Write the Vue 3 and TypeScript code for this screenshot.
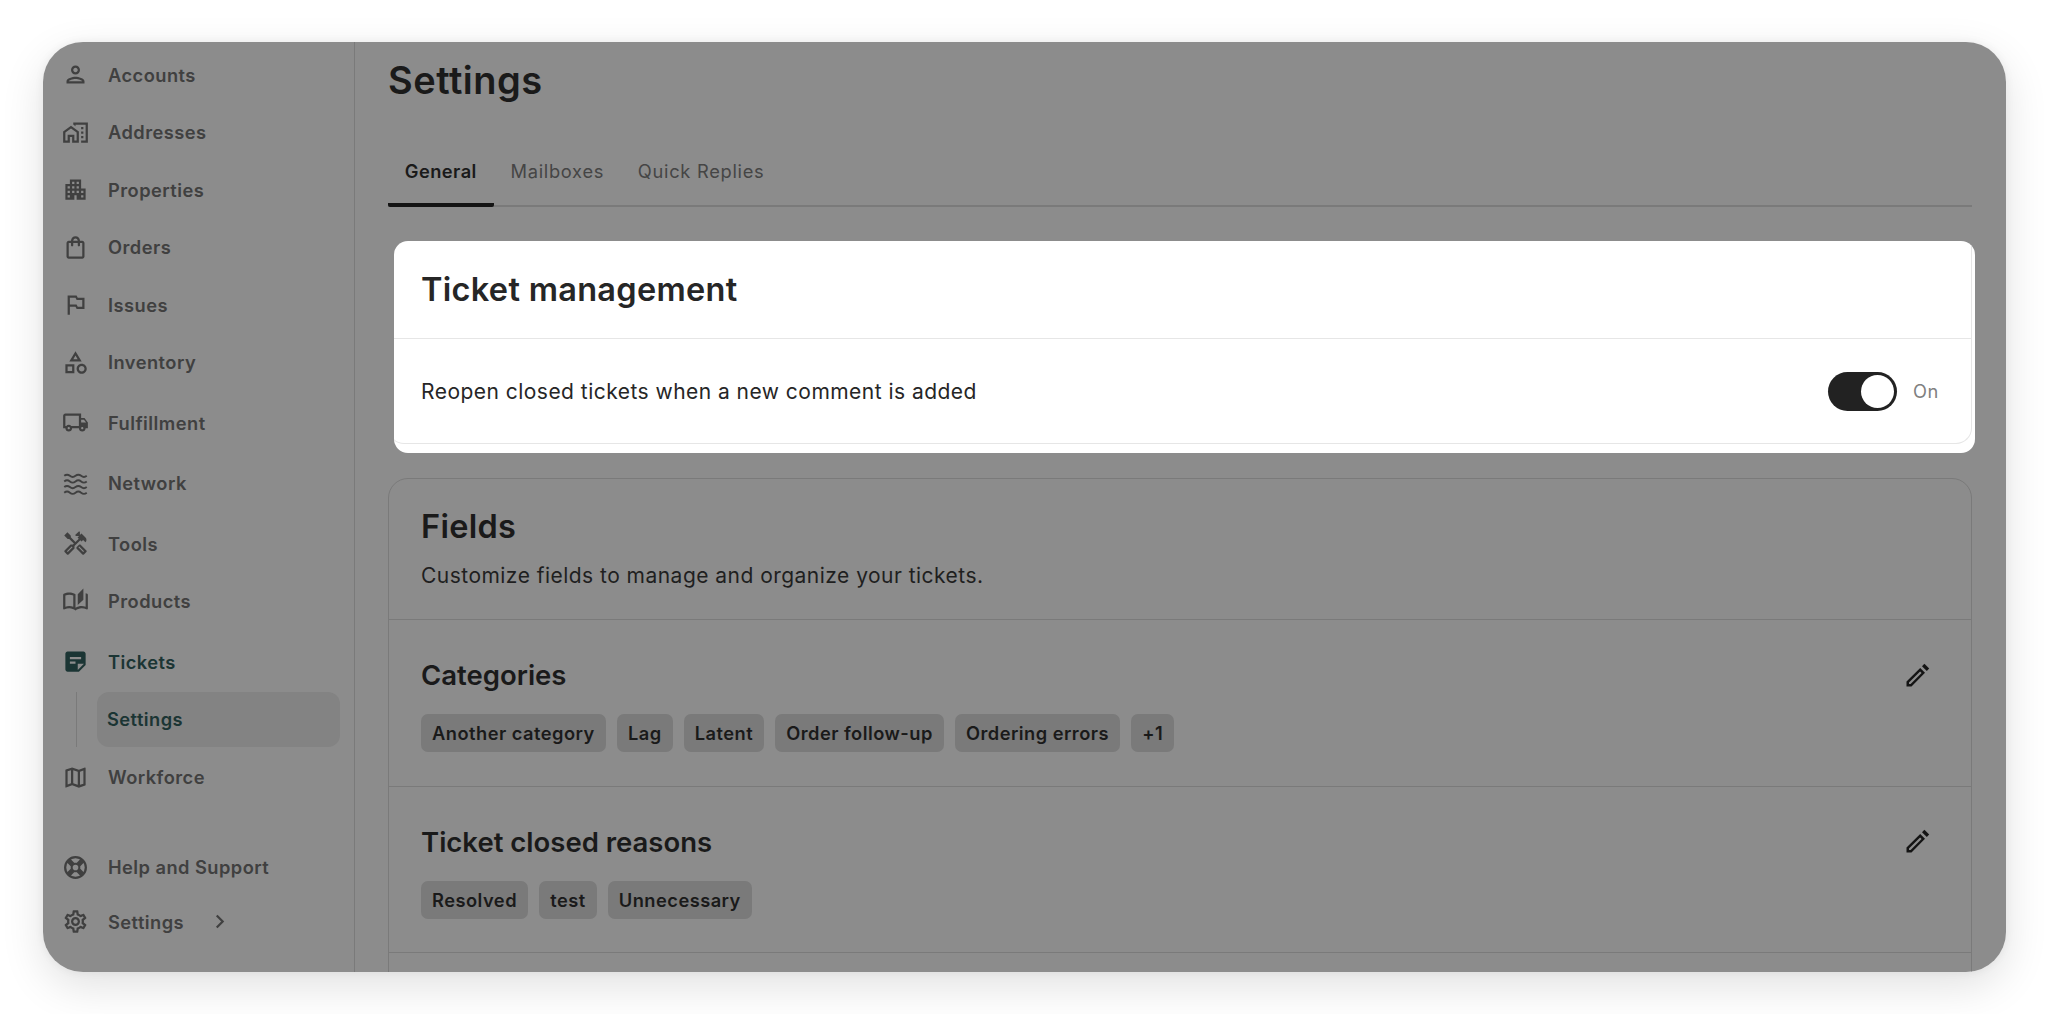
<script setup lang="ts">
interface NavItem { label: string; d: string; gap?: boolean; active?: boolean; stroke?: boolean }

const icons: Record<string, string> = {
  person: 'M12 6c1.1 0 2 .9 2 2s-.9 2-2 2-2-.9-2-2 .9-2 2-2m0 10c2.7 0 5.8 1.29 6 2H6c.23-.72 3.31-2 6-2m0-12C9.79 4 8 5.79 8 8s1.79 4 4 4 4-1.79 4-4-1.79-4-4-4zm0 10c-2.67 0-8 1.34-8 4v2h16v-2c0-2.66-5.33-4-8-4z',
  home: 'M1 11v10h6v-5h2v5h6V11L8 6l-7 5zm12 8h-2v-5H5v5H3v-7l5-3.5 5 3.5v7zm4-12h2v2h-2zm0 4h2v2h-2zm0 4h2v2h-2zM10 3v1.97l2 1.43V5h9v14h-4v2h6V3z',
  apartment: 'M17 11V3H7v4H3v14h8v-4h2v4h8V11h-4zM7 19H5v-2h2v2zm0-4H5v-2h2v2zm0-4H5V9h2v2zm4 4H9v-2h2v2zm0-4H9V9h2v2zm0-4H9V5h2v2zm4 8h-2v-2h2v2zm0-4h-2V9h2v2zm0-4h-2V5h2v2zm4 12h-2v-2h2v2zm0-4h-2v-2h2v2z',
  bag: 'M18 6h-2c0-2.21-1.79-4-4-4S8 3.79 8 6H6c-1.1 0-2 .9-2 2v12c0 1.1.9 2 2 2h12c1.1 0 2-.9 2-2V8c0-1.1-.9-2-2-2zm-6-2c1.1 0 2 .9 2 2h-4c0-1.1.9-2 2-2zm6 16H6V8h2v2c0 .55.45 1 1 1s1-.45 1-1V8h4v2c0 .55.45 1 1 1s1-.45 1-1V8h2v12z',
  flag: 'M14 6l-1-2H5v17h2v-7h5l1 2h7V6h-6zm4 8h-4l-1-2H7V6h5l1 2h5v6z',
  category: 'M12 2l-5.5 9h11L12 2zm0 3.84L13.93 9h-3.87L12 5.84zM17.5 13c-2.49 0-4.5 2.01-4.5 4.5s2.01 4.5 4.5 4.5 4.5-2.01 4.5-4.5-2.01-4.5-4.5-4.5zm0 7c-1.38 0-2.5-1.12-2.5-2.5s1.12-2.5 2.5-2.5 2.5 1.12 2.5 2.5-1.12 2.5-2.5 2.5zM3 21.5h8v-8H3v8zm2-6h4v4H5v-4z',
  truck: 'M20 8h-3V4H3c-1.1 0-2 .9-2 2v11h2c0 1.66 1.34 3 3 3s3-1.34 3-3h6c0 1.66 1.34 3 3 3s3-1.34 3-3h2v-5l-3-4zm-.5 1.5l1.96 2.5H17V9.5h2.5zM6 18c-.55 0-1-.45-1-1s.45-1 1-1 1 .45 1 1-.45 1-1 1zm2.22-3c-.55-.61-1.33-1-2.22-1s-1.67.39-2.22 1H3V6h12v9H8.22zM18 18c-.55 0-1-.45-1-1s.45-1 1-1 1 .45 1 1-.45 1-1 1z',
  waves: 'M2 5.2c1.7-1.4 3.3-1.4 5 0s3.3 1.4 5 0 3.3-1.4 5 0 3.3 1.4 5 0M2 10.2c1.7-1.4 3.3-1.4 5 0s3.3 1.4 5 0 3.3-1.4 5 0 3.3 1.4 5 0M2 15.2c1.7-1.4 3.3-1.4 5 0s3.3 1.4 5 0 3.3-1.4 5 0 3.3 1.4 5 0M2 20.2c1.7-1.4 3.3-1.4 5 0s3.3 1.4 5 0 3.3-1.4 5 0 3.3 1.4 5 0',
  tools: 'M21.67 18.17l-5.3-5.3h-.99l-2.54 2.54v.99l5.3 5.3c.39.39 1.02.39 1.41 0l2.12-2.12c.39-.38.39-1.02 0-1.41zm-2.83 1.42l-4.24-4.24.71-.71 4.24 4.24-.71.71zM17.34 10.19l1.41-1.41 2.12 2.12c1.17-1.17 1.17-3.07 0-4.24l-3.54-3.54-1.41 1.41V1.71l-.7-.71-3.54 3.54.71.71h2.83l-1.41 1.41 1.06 1.06-2.89 2.89-4.13-4.13V5.06L4.83 2.04 2 4.87 5.03 7.9h1.41l4.13 4.13-.85.85H7.6l-5.3 5.3c-.39.39-.39 1.02 0 1.41l2.12 2.12c.39.39 1.02.39 1.41 0l5.3-5.3v-2.12l5.15-5.15 1.06 1.05zm-7.98 5.15l-4.24 4.24-.71-.71 4.24-4.24.71.71z',
  book: 'M22.47 5.2C22 4.96 21.51 4.76 21 4.59v12.03C19.86 16.21 18.69 16 17.5 16c-1.9 0-3.78.54-5.5 1.58V5.48C10.38 4.55 8.51 4 6.5 4c-1.79 0-3.48.44-4.97 1.2-.33.16-.53.51-.53.88v12.08c0 .76.81.99 1.32.83C3.55 18.4 5 18 6.5 18c2.07 0 3.98.82 5.5 2 1.52-1.18 3.43-2 5.5-2 1.5 0 2.95.4 4.18.99.51.16 1.32-.07 1.32-.83V6.08c0-.37-.2-.72-.53-.88zM10 16.62C8.86 16.21 7.69 16 6.5 16c-1.19 0-2.36.21-3.5.62V6.71C4.11 6.24 5.28 6 6.5 6c1.2 0 2.39.25 3.5.72v9.9zM19 .5l-5 5V15l5-4.5V.5z',
  note: 'M19 3H4.99C3.89 3 3 3.9 3 5l.01 14c0 1.1.89 2 1.99 2h10l6-6V5c0-1.1-.9-2-2-2zM7 8h10v2H7V8zm5 6H7v-2h5v2zm2 5.5V14h5.5L14 19.5z',
  map: 'M20.5 3l-.16.03L15 5.1 9 3 3.36 4.9c-.21.07-.36.25-.36.48V20.5c0 .28.22.5.5.5l.16-.03L9 18.9l6 2.1 5.64-1.9c.21-.07.36-.25.36-.48V3.5c0-.28-.22-.5-.5-.5zM10 5.47l4 1.4v11.66l-4-1.4V5.47zm-5 .99l3-1.01v11.7l-3 1.16V6.46zm14 11.08l-3 1.01V6.86l3-1.16v11.84z',
  gear: 'M19.43 12.98c.04-.32.07-.64.07-.98 0-.34-.03-.66-.07-.98l2.11-1.65c.19-.15.24-.42.12-.64l-2-3.46c-.09-.16-.26-.25-.44-.25-.06 0-.12.01-.17.03l-2.49 1c-.52-.4-1.08-.73-1.69-.98l-.38-2.65C14.46 2.18 14.25 2 14 2h-4c-.25 0-.46.18-.49.42l-.38 2.65c-.61.25-1.17.59-1.69.98l-2.49-1c-.06-.02-.12-.03-.18-.03-.17 0-.34.09-.43.25l-2 3.46c-.13.22-.07.49.12.64l2.11 1.65c-.04.32-.07.65-.07.98 0 .33.03.66.07.98l-2.11 1.65c-.19.15-.24.42-.12.64l2 3.46c.09.16.26.25.44.25.06 0 .12-.01.17-.03l2.49-1c.52.4 1.08.73 1.69.98l.38 2.65c.03.24.24.42.49.42h4c.25 0 .46-.18.49-.42l.38-2.65c.61-.25 1.17-.59 1.69-.98l2.49 1c.06.02.12.03.18.03.17 0 .34-.09.43-.25l2-3.46c.12-.22.07-.49-.12-.64l-2.11-1.65zm-1.98-1.71c.04.31.05.52.05.73 0 .21-.02.43-.05.73l-.14 1.13.89.7 1.08.84-.7 1.21-1.27-.51-1.04-.42-.9.68c-.43.32-.84.56-1.25.73l-1.06.43-.16 1.13-.2 1.35h-1.4l-.19-1.35-.16-1.13-1.06-.43c-.43-.18-.83-.41-1.23-.71l-.91-.7-1.06.43-1.27.51-.7-1.21 1.08-.84.89-.7-.14-1.13c-.03-.31-.05-.54-.05-.74s.02-.43.05-.73l.14-1.13-.89-.7-1.08-.84.7-1.21 1.27.51 1.04.42.9-.68c.43-.32.84-.56 1.25-.73l1.06-.43.16-1.13.2-1.35h1.39l.19 1.35.16 1.13 1.06.43c.43.18.83.41 1.23.71l.91.7 1.06-.43 1.27-.51.7 1.21-1.07.85-.89.7.14 1.13zM12 8c-2.21 0-4 1.79-4 4s1.79 4 4 4 4-1.79 4-4-1.79-4-4-4zm0 6c-1.1 0-2-.9-2-2s.9-2 2-2 2 .9 2 2-.9 2-2 2z',
}

const navTop: NavItem[] = [
  { label: 'Accounts', d: icons.person },
  { label: 'Addresses', d: icons.home },
  { label: 'Properties', d: icons.apartment },
  { label: 'Orders', d: icons.bag },
  { label: 'Issues', d: icons.flag },
  { label: 'Inventory', d: icons.category },
  { label: 'Fulfillment', d: icons.truck, gap: true },
  { label: 'Network', d: icons.waves, gap: true, stroke: true },
  { label: 'Tools', d: icons.tools, gap: true },
  { label: 'Products', d: icons.book },
  { label: 'Tickets', d: icons.note, gap: true, active: true },
]

const tabs = ['General', 'Mailboxes', 'Quick Replies']

const groups = [
  { title: 'Categories', chips: ['Another category', 'Lag', 'Latent', 'Order follow-up', 'Ordering errors', '+1'] },
  { title: 'Ticket closed reasons', chips: ['Resolved', 'test', 'Unnecessary'] },
]
</script>

<template>
  <div class="page">
    <div class="window">
      <aside class="sidebar">
        <nav class="nav">
          <a
            v-for="item in navTop"
            :key="item.label"
            class="nav-item"
            :class="{ 'nav-gap': item.gap, 'nav-active': item.active }"
          >
            <svg class="nav-icon" viewBox="0 0 24 24">
              <path
                :d="item.d"
                :fill="item.stroke ? 'none' : 'currentColor'"
                :stroke="item.stroke ? 'currentColor' : 'none'"
                :stroke-width="item.stroke ? 1.7 : 0"
              />
            </svg>
            <span>{{ item.label }}</span>
          </a>
          <div class="sub">
            <a class="sub-item">Settings</a>
          </div>
          <a class="nav-item">
            <svg class="nav-icon" viewBox="0 0 24 24"><path :d="icons.map" fill="currentColor" /></svg>
            <span>Workforce</span>
          </a>
        </nav>
        <div class="nav-bottom">
          <a class="nav-item nav-item-low">
            <svg class="nav-icon" viewBox="0 0 24 24" fill="none" stroke="currentColor">
              <circle cx="12" cy="12" r="9.2" stroke-width="2" />
              <circle cx="12" cy="12" r="3.4" stroke-width="1.8" />
              <path d="M5.6 5.6l3.9 3.9M18.4 5.6l-3.9 3.9M5.6 18.4l3.9-3.9M18.4 18.4l-3.9-3.9" stroke-width="4.4" />
            </svg>
            <span>Help and Support</span>
          </a>
          <a class="nav-item nav-item-low">
            <svg class="nav-icon" viewBox="0 0 24 24"><path :d="icons.gear" fill="currentColor" /></svg>
            <span>Settings</span>
            <svg class="chev" viewBox="0 0 24 24" fill="none" stroke="currentColor" stroke-width="2.8">
              <path d="M8.5 4.5L16 12l-7.5 7.5" />
            </svg>
          </a>
        </div>
      </aside>

      <main class="main">
        <h1 class="page-title">Settings</h1>
        <div class="tabs">
          <button v-for="(t, i) in tabs" :key="t" class="tab" :class="{ 'tab-on': i === 0 }">{{ t }}</button>
        </div>

        <section class="spot">
          <div class="spot-card">
            <header class="spot-head">
              <h2 class="card-title">Ticket management</h2>
            </header>
            <div class="spot-row">
              <span class="row-text">Reopen closed tickets when a new comment is added</span>
              <div class="toggle-wrap">
                <span class="toggle"><span class="knob"></span></span>
                <span class="on">On</span>
              </div>
            </div>
          </div>
        </section>

        <section class="card">
          <header class="card-head">
            <h2 class="card-title dim-title">Fields</h2>
            <p class="row-text sub-text">Customize fields to manage and organize your tickets.</p>
          </header>
          <div v-for="g in groups" :key="g.title" class="group">
            <div class="group-top">
              <h3 class="group-title">{{ g.title }}</h3>
              <svg class="pencil" viewBox="0 0 25 25">
                <path d="M1.5 23.5v-5L15.2 5l4.8 4.8L6.5 23.5z M4 21h1.6L16.6 9.9l-1.5-1.5L4 19.5z" fill="#141414" fill-rule="evenodd" />
                <path d="M17 3.2L19.4.8l4.8 4.8-2.4 2.4z" fill="#141414" />
              </svg>
            </div>
            <div class="chips">
              <span v-for="c in g.chips" :key="c" class="chip">{{ c }}</span>
            </div>
          </div>
          <div class="group"></div>
        </section>
      </main>
    </div>
  </div>
</template>

<style>
html, body { margin: 0; background: #fff; overflow: hidden; }
</style>

<style scoped>
.page {
  height: 1014px;
  padding: 42px 42px 0 43px;
  box-sizing: border-box;
  background: #fff;
  font-family: Inter, "Liberation Sans", sans-serif;
}
.window {
  height: 929.5px;
  display: flex;
  overflow: hidden;
  background: #8c8c8c;
  border-radius: 40px;
  box-shadow: 0 14px 44px rgba(0, 0, 0, 0.12), 0 0 10px rgba(0, 0, 0, 0.06);
}
.sidebar {
  width: 312px;
  flex: none;
  box-sizing: border-box;
  display: flex;
  flex-direction: column;
  justify-content: space-between;
  padding: 4px 14px 22.5px 17px;
  border-right: 1.5px solid #7a7a7a;
}
.nav { display: flex; flex-direction: column; }
.nav-item {
  display: flex;
  align-items: center;
  height: 57.5px;
  padding-left: 2px;
  gap: 19px;
  font-size: 18.3px;
  letter-spacing: 0.45px;
  font-weight: 600;
  color: #404040;
}
.nav-gap { margin-top: 3px; }
.nav-active { color: #1b3534; }
.nav-icon { width: 27px; height: 27px; flex: none; }
.nav-item-low { height: 54.6px; }
.chev { width: 19px; height: 19px; margin-left: 7px; }
.sub {
  margin: 1px 0 2px 15.5px;
  padding-left: 20.5px;
  border-left: 1.5px solid #7a7a7a;
  height: 55px;
}
.sub-item {
  display: flex;
  align-items: center;
  height: 100%;
  padding-left: 10px;
  border-radius: 12px;
  background: #838383;
  font-size: 18.3px;
  letter-spacing: 0.45px;
  font-weight: 600;
  color: #1b3534;
}

.main {
  flex: 1;
  min-width: 0;
  padding: 15px 34px 0 33px;
}
.page-title {
  margin: 0;
  font-size: 38px;
  line-height: 47px;
  letter-spacing: 0.5px;
  font-weight: 600;
  color: #1a1a1a;
}
.tabs {
  display: flex;
  margin-top: 41px;
  border-bottom: 2px solid #7a7a7a;
}
.tab {
  all: unset;
  padding: 15px 16.8px 21px;
  line-height: 22px;
  font-size: 18.3px;
  letter-spacing: 0.72px;
  font-weight: 400;
  color: #454545;
  margin-bottom: -2px;
  border-bottom: 4px solid transparent;
  border-radius: 2px;
}
.tab-on {
  font-weight: 600;
  letter-spacing: 0.45px;
  color: #1a1a1a;
  border-bottom-color: #141414;
}

.spot {
  margin: 34px -3px 0 6px;
  background: #fff;
  border-radius: 14px;
  overflow: hidden;
  padding-bottom: 9px;
}
.spot-card {
  margin: 0 3px 0 -6px;
  border: 1.5px solid #e6e6e6;
  border-top: none;
  border-radius: 0 0 16px 16px;
}
.spot-head {
  height: 97px;
  display: flex;
  align-items: center;
  padding-left: 32px;
  border-bottom: 1.5px solid #e6e6e6;
}
.card-title {
  margin: 0;
  font-size: 32.5px;
  line-height: 40px;
  letter-spacing: 0.3px;
  font-weight: 600;
  color: #262626;
}
.dim-title { color: #1a1a1a; }
.spot-row {
  height: 104px;
  display: flex;
  align-items: center;
  justify-content: space-between;
  padding: 0 32px;
}
.row-text {
  font-size: 21px;
  letter-spacing: 0.47px;
  color: #262626;
}
.toggle-wrap { display: flex; align-items: center; gap: 16px; }
.toggle {
  width: 69px;
  height: 39px;
  box-sizing: border-box;
  padding: 3px;
  border-radius: 20px;
  background: #222;
  display: flex;
  justify-content: flex-end;
}
.knob { width: 33px; height: 33px; border-radius: 50%; background: #fff; }
.on { font-size: 18.3px; letter-spacing: 0.6px; color: #808080; }

.card {
  margin-top: 25px;
  border: 1.5px solid #7a7a7a;
  border-radius: 20px;
}
.card-head {
  height: 140px;
  box-sizing: border-box;
  padding: 28px 32px 0;
}
.sub-text { margin: 15px 0 0; line-height: 28px; color: #1f1f1f; }
.group {
  height: 166.7px;
  box-sizing: border-box;
  border-top: 1.5px solid #7a7a7a;
  padding: 0 32px;
}
.group-top {
  height: 34px;
  padding-top: 38px;
  margin-bottom: 22px;
  display: flex;
  align-items: center;
  justify-content: space-between;
}
.group-title {
  margin: 0;
  font-size: 27.5px;
  line-height: 34px;
  font-weight: 600;
  color: #1a1a1a;
}
.pencil { width: 25px; height: 25px; margin-right: 9px; }
.chips { display: flex; gap: 11px; }
.chip {
  height: 38px;
  padding: 0 11.1px;
  display: flex;
  align-items: center;
  border-radius: 7px;
  background: #7a7a7a;
  font-size: 18.3px;
  letter-spacing: 0.46px;
  font-weight: 600;
  color: #1a1a1a;
}
</style>
